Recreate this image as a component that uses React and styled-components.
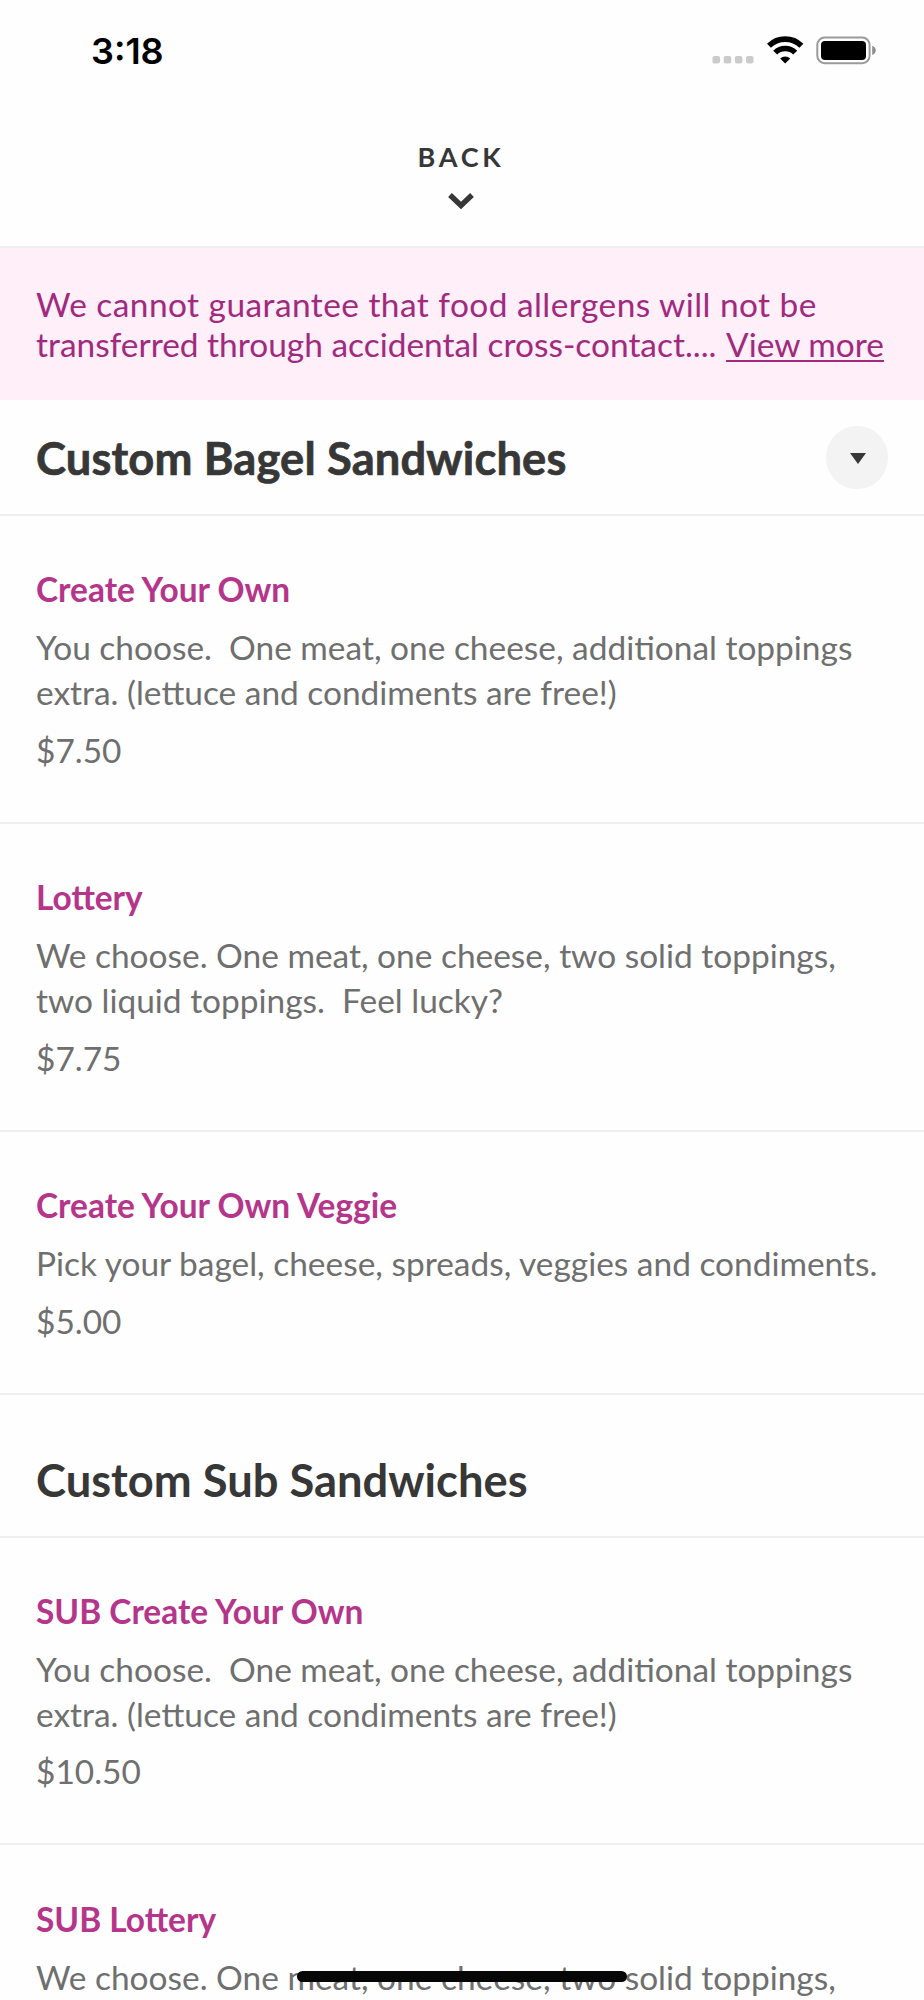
import React from "react";

import styled, { createGlobalStyle } from "styled-components";

const GlobalStyle = createGlobalStyle`
  * {
    box-sizing: border-box;
  }

  body {
    margin: 0;
    background: #fff;
    font-family: Lato, sans-serif;
  }

  h1, h2, h3, p, ul {
    margin: 0;
    padding: 0;
  }
`;

const Screen = styled.div`
  position: relative;
  width: 924px;
  height: 2000px;
  overflow: hidden;
  background: #fefefe;
`;

const StatusBar = styled.header`
  display: flex;
  justify-content: space-between;
  align-items: center;
  height: 100px;
  padding: 0 46px 0 91px;
`;

const Time = styled.span`
  padding-top: 2px;
  font-family: Inter, sans-serif;
  font-size: 36px;
  font-weight: 600;
  line-height: 42px;
  color: #000;
`;

const BackButton = styled.button`
  display: flex;
  flex-direction: column;
  align-items: center;
  width: 100%;
  height: 147.7px;
  padding: 41px 2px 0 0;
  border: 0;
  border-bottom: 2px solid #efefef;
  background: transparent;
  color: #373737;
  font-family: inherit;
  font-size: 27px;
  font-weight: 700;
  line-height: 32px;
  letter-spacing: 3.8px;
`;

const Chevron = styled.svg`
  margin-top: 18px;
`;

const Notice = styled.p`
  height: 152px;
  padding: 36px 36px 0;
  background: #feeff9;
  color: #a12a7e;
  font-size: 33.45px;
  line-height: 40.4px;
  white-space: nowrap;
`;

const NoticeLead = styled.span`
  letter-spacing: 0.45px;
`;

const MoreLink = styled.span`
  margin-left: 1px;
  text-decoration: underline;
  text-decoration-thickness: 2px;
  text-underline-offset: 3px;
  text-decoration-skip-ink: none;
`;

const SectionHeader = styled.div`
  display: flex;
  justify-content: space-between;
  align-items: flex-start;
  height: ${props => (props.$pinned ? "116px" : "142.7px")};
  padding: ${props => (props.$pinned ? "26.5px" : "53px")} 36px 0;
  border-bottom: 2px solid #efefef;
`;

const SectionTitle = styled.h2`
  color: #373737;
  font-size: 45.3px;
  font-weight: 700;
  line-height: 63px;
  letter-spacing: ${props => (props.$pinned ? "0.14px" : "normal")};
  -webkit-text-stroke: ${props => (props.$pinned ? "0.7px #373737" : "0")};
`;

const Toggle = styled.button`
  display: flex;
  align-items: center;
  justify-content: center;
  width: 62.5px;
  height: 62.5px;
  padding: 2px 0 0 2px;
  border: 0;
  border-radius: 50%;
  background: #f3f3f3;
`;

const Item = styled.li`
  display: flex;
  flex-direction: column;
  gap: 13.2px;
  padding: 51.6px 36px 49.4px;
  border-bottom: 2px solid #efefef;
  font-size: 33.45px;
  line-height: 44.64px;
  list-style: none;
  color: #6f6f6f;
`;

const ItemName = styled.h3`
  color: #b5358a;
  font-size: inherit;
  font-weight: 700;
`;

const Description = styled.p`
  white-space: pre;
`;

const Price = styled.p``;

const HomeIndicator = styled.div`
  position: absolute;
  left: 297px;
  bottom: 18px;
  width: 330px;
  height: 11px;
  border-radius: 6px;
  background: #060606;
`;

const sections = [
  {
    title: "Custom Bagel Sandwiches",
    pinned: true,
    items: [
      {
        name: "Create Your Own",
        description:
          "You choose.  One meat, one cheese, additional toppings\nextra. (lettuce and condiments are free!)",
        price: "$7.50"
      },
      {
        name: "Lottery",
        description:
          "We choose. One meat, one cheese, two solid toppings,\ntwo liquid toppings.  Feel lucky?",
        price: "$7.75"
      },
      {
        name: "Create Your Own Veggie",
        description: "Pick your bagel, cheese, spreads, veggies and condiments.",
        price: "$5.00"
      }
    ]
  },
  {
    title: "Custom Sub Sandwiches",
    items: [
      {
        name: "SUB Create Your Own",
        description:
          "You choose.  One meat, one cheese, additional toppings\nextra. (lettuce and condiments are free!)",
        price: "$10.50"
      },
      {
        name: "SUB Lottery",
        description: "We choose. One meat, one cheese, two solid toppings,"
      }
    ]
  }
];

function StatusIcons() {
  return (
    <svg width="166" height="30" viewBox="0 0 166 30">
      <g fill="#cbcbcb">
        <rect x="0.5" y="21" width="7.5" height="7.5" rx="2" />
        <rect x="11.7" y="21" width="7.5" height="7.5" rx="2" />
        <rect x="22.9" y="21" width="7.5" height="7.5" rx="2" />
        <rect x="34" y="21" width="7.5" height="7.5" rx="2" />
      </g>
      <g fill="none" stroke="#000" strokeWidth="5.6">
        <path d="M57 10.8a23 23 0 0 1 32.4 0" />
        <path d="M63.2 17.6a14.1 14.1 0 0 1 20 0" />
      </g>
      <path d="M73.2 28.6l-5-5.1a7.2 7.2 0 0 1 10 0z" fill="#000" />
      <rect x="105.3" y="2.6" width="52.3" height="25.6" rx="7.5" fill="none" stroke="#9a9a9a" strokeWidth="2" />
      <rect x="109" y="6" width="45" height="19" rx="4" fill="#000" />
      <path d="M160.2 10.8c2.1 .8 3.5 2.5 3.5 4.6s-1.4 3.8-3.5 4.6z" fill="#8e8e8e" />
    </svg>
  );
}

function MenuItem({ item }) {
  const { name, description, price } = item;
  return (
    <Item>
      <ItemName>{name}</ItemName>
      <Description>{description}</Description>
      {price && <Price>{price}</Price>}
    </Item>
  );
}

function Section({ section }) {
  const { title, pinned, items } = section;
  return (
    <section>
      <SectionHeader $pinned={pinned}>
        <SectionTitle $pinned={pinned}>{title}</SectionTitle>
        {pinned && (
          <Toggle aria-label="Choose section">
            <svg width="16" height="11" viewBox="0 0 16 11">
              <path d="M0 0h16L8 11z" fill="#373737" />
            </svg>
          </Toggle>
        )}
      </SectionHeader>
      <ul>
        {items.map(item => (
          <MenuItem key={item.name} item={item} />
        ))}
      </ul>
    </section>
  );
}

export default function App() {
  return (
    <Screen>
      <GlobalStyle />
      <StatusBar>
        <Time>3:18</Time>
        <StatusIcons />
      </StatusBar>
      <BackButton>
        BACK
        <Chevron width="26" height="19" viewBox="0 0 26 19">
          <path d="M2 4l11 10.5L24 4" fill="none" stroke="#373737" strokeWidth="5.4" />
        </Chevron>
      </BackButton>
      <Notice>
        <NoticeLead>We cannot guarantee that food allergens will not be</NoticeLead>
        <br />
        transferred through accidental cross-contact.... <MoreLink>View more</MoreLink>
      </Notice>
      {sections.map(section => (
        <Section key={section.title} section={section} />
      ))}
      <HomeIndicator />
    </Screen>
  );
}
